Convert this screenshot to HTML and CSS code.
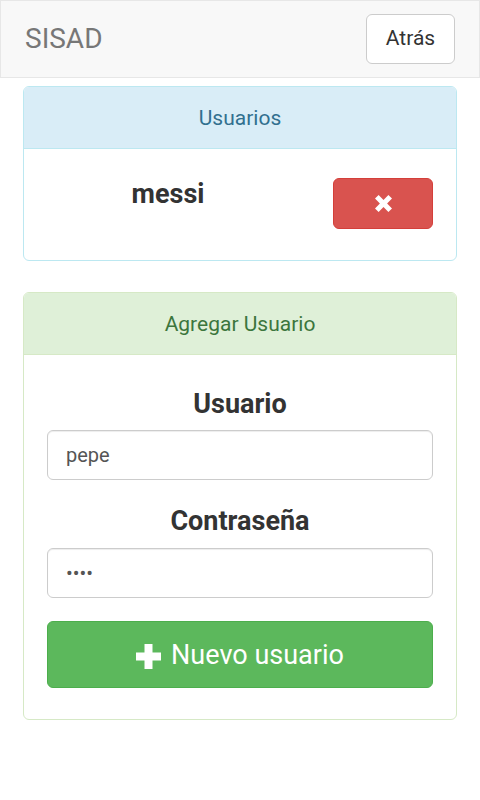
FILE: index.html
```html
<!DOCTYPE html>
<html lang="es">
<head>
<meta charset="utf-8">
<title>SISAD</title>
<link rel="stylesheet" href="styles.css">
</head>
<body>
<nav class="navbar">
  <span class="brand">SISAD</span>
  <button class="btn btn-default">Atrás</button>
</nav>
<main class="container">
  <section class="panel panel-info">
    <div class="panel-heading">Usuarios</div>
    <div class="panel-body user-row">
      <div class="user-name">messi</div>
      <div class="user-action">
        <button class="btn btn-danger" aria-label="Eliminar">
          <svg class="icon-x" viewBox="0 0 17 17" width="17" height="17"><path d="M3.6 0 L8.5 4.9 L13.4 0 L17 3.6 L12.1 8.5 L17 13.4 L13.4 17 L8.5 12.1 L3.6 17 L0 13.4 L4.9 8.5 L0 3.6 Z" fill="#fff"/></svg>
        </button>
      </div>
    </div>
  </section>
  <section class="panel panel-success">
    <div class="panel-heading">Agregar Usuario</div>
    <form class="panel-body form">
      <div class="form-group">
        <label class="form-label" for="u">Usuario</label>
        <input class="form-control" id="u" type="text" value="pepe">
      </div>
      <div class="form-group">
        <label class="form-label" for="p">Contraseña</label>
        <input class="form-control" id="p" type="password" value="pepe">
      </div>
      <button type="button" class="btn btn-success btn-lg">
        <svg class="icon-plus" viewBox="0 0 25 25" width="25" height="25"><path d="M8.5 0 H16.5 V8.5 H25 V16.5 H16.5 V25 H8.5 V16.5 H0 V8.5 H8.5 Z" fill="#fff"/></svg>
        <span>Nuevo usuario</span>
      </button>
    </form>
  </section>
</main>
</body>
</html>
```
FILE: styles.css
```css
* { box-sizing: border-box; }
html, body { margin: 0; padding: 0; background: #fff; }
body {
  font-family: Roboto, "Liberation Sans", sans-serif;
  font-size: 20px;
  color: #333;
  width: 480px;
}
.navbar {
  display: flex;
  align-items: center;
  justify-content: space-between;
  height: 78px;
  background: #f8f8f8;
  border: 1px solid #e7e7e7;
  padding: 0 24px 0 24px;
}
.brand {
  font-size: 28px;
  color: #777;
  line-height: 1;
}
.btn {
  font-family: inherit;
  cursor: pointer;
  border: 1px solid transparent;
  border-radius: 6px;
  line-height: 1.4;
}
.btn-default {
  background: #fff;
  border-color: #ccc;
  color: #333;
  font-size: 21px;
  width: 89px;
  height: 50px;
  padding: 0;
}
.container { padding: 8px 23px 0; }
.panel {
  border: 1px solid transparent;
  border-radius: 6px;
  margin-bottom: 31px;
  overflow: hidden;
}
.panel-heading {
  height: 62px;
  display: flex;
  align-items: center;
  justify-content: center;
  font-size: 21px;
  border-bottom: 1px solid transparent;
  padding-top: 1px;
}
.panel-info { border-color: #bce8f1; }
.panel-info .panel-heading { background: #d9edf7; color: #31708f; border-color: #bce8f1; }
.panel-success { border-color: #d6e9c6; }
.panel-success .panel-heading { background: #dff0d8; color: #3c763d; border-color: #d6e9c6; }

.user-row {
  display: grid;
  grid-template-columns: 2fr 1fr;
  align-items: start;
  height: 111px;
}
.user-name {
  text-align: center;
  font-weight: 700;
  font-size: 27px;
  padding-top: 32px;
  line-height: 1;
}
.user-action { padding: 29px 22px 0 21px; }
.btn-danger {
  display: flex;
  align-items: center;
  justify-content: center;
  width: 100px;
  height: 51px;
  background: #d9534f;
  border-color: #d43f3a;
  padding: 0;
}
.icon-x { width: 17px; height: 17px; }

.form { padding: 32px 23px 31px; display: flex; flex-direction: column; }
.form-group { display: flex; flex-direction: column; margin-bottom: 24px; }
.form-group + .form-group { margin-bottom: 23px; }
.form-label {
  text-align: center;
  font-weight: 700;
  font-size: 27px;
  line-height: 34px;
  margin-bottom: 9px;
}
.form-group + .form-group .form-label { margin-bottom: 10px; }
.form-control {
  height: 50px;
  border: 1px solid #ccc;
  border-radius: 6px;
  font-family: inherit;
  font-size: 20px;
  color: #555;
  padding: 0 18px;
  box-shadow: inset 0 1px 1px rgba(0,0,0,.075);
  outline: none;
}
.btn-success {
  display: flex;
  align-items: center;
  justify-content: center;
  gap: 10px;
  height: 67px;
  background: #5cb85c;
  border-color: #4cae4c;
  color: #fff;
  font-size: 27px;
  padding: 3px 0 0;
}
.icon-plus { width: 25px; height: 25px; }
```
